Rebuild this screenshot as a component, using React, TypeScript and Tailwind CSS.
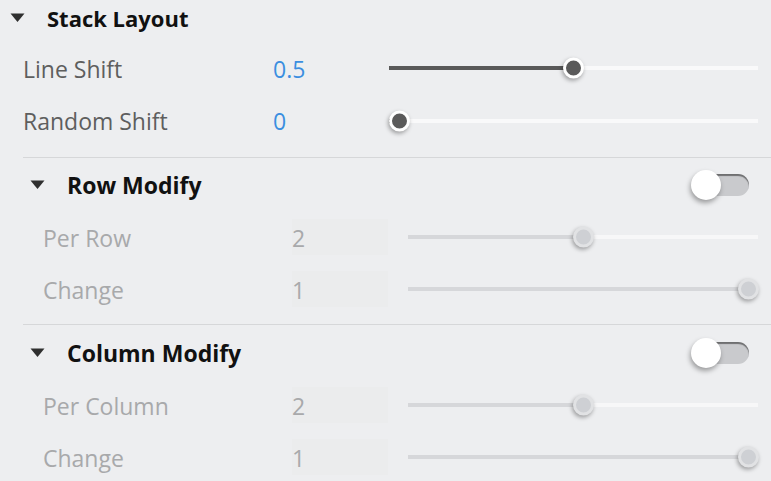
import React from "react";

function Caret() {
  return (
    <svg width="15" height="10" viewBox="0 0 15 10">
      <polygon points="0.5,0.5 14.5,0.5 7.5,9" fill="#2f2f2f" />
    </svg>
  );
}

function Slider({ value, disabled }: { value: number; disabled?: boolean }) {
  return (
    <div className="relative flex-1 h-[20px] flex items-center">
      <div className="relative w-full h-[4px]">
        <div className={`absolute inset-0 ${disabled ? "bg-[#f7f7f8]" : "bg-[#f9f9fa]"}`} />
        <div
          className={`absolute left-0 top-0 h-full ${disabled ? "bg-[#d6d7da]" : "bg-[#595959]"}`}
          style={{ width: `calc((100% - 20px) * ${value} + 10px)` }}
        />
        <div
          className={`absolute top-1/2 -translate-y-1/2 w-[21px] h-[21px] rounded-full border-[3px] shadow-[-1px_2px_4px_rgba(0,0,0,0.35)] ${
            disabled ? "bg-[#ced0d4] border-[#e1e2e4]" : "bg-[#5a5a5a] border-white"
          }`}
          style={{ left: `calc((100% - 20px) * ${value} - 0.5px)` }}
        />
      </div>
    </div>
  );
}

function Toggle() {
  return (
    <div className="relative w-[58px] h-[30px] flex items-center">
      <div className="absolute right-0 w-[44px] h-[22px] rounded-full bg-[#c9cacd] shadow-[inset_0_2px_1px_rgba(0,0,0,0.45)]" />
      <div className="absolute left-0 w-[30px] h-[30px] rounded-full bg-white shadow-[-1px_3px_5px_rgba(0,0,0,0.35)]" />
    </div>
  );
}

function Row({
  label,
  value,
  slider,
  disabled,
}: {
  label: string;
  value: string;
  slider: number;
  disabled?: boolean;
}) {
  return (
    <div className="flex items-center h-[52px] pl-[23px] pr-[13px]">
      <div className={`w-[249px] pt-[2px] text-[23px] ${disabled ? "text-[#a8a9ab]" : "text-[#5e5e5e]"}`}>{label}</div>
      <div
        className={`w-[96px] h-[36px] flex items-center pt-[2px] text-[23px] ${
          disabled ? "text-[#a8a9ab] bg-[#ebeced]" : "text-[#3b8ee0]"
        }`}
      >
        {value}
      </div>
      <div className="w-[20px]" />
      <Slider value={slider} disabled={disabled} />
    </div>
  );
}

function SubSection({ title, rows }: { title: string; rows: { label: string; value: string; slider: number }[] }) {
  return (
    <div>
      <div className="flex items-center h-[36px] pl-[10px] pr-[22px]">
        <Caret />
        <div className="ml-[22px] text-[23px] font-bold text-[#111111] flex-1">{title}</div>
        <Toggle />
      </div>
      <div className="mt-[8px]">
        {rows.map((r) => (
          <Row key={r.label} {...r} disabled />
        ))}
      </div>
    </div>
  );
}

export default function App() {
  return (
    <div
      className="w-[771px] h-[481px] overflow-hidden bg-[#edeef0]"
      style={{ fontFamily: '"Open Sans", "Noto Sans", sans-serif' }}
    >
      <div className="flex items-center h-[36px] pl-[10px]">
        <Caret />
        <div className="ml-[22px] text-[22px] font-bold text-[#111111]">Stack Layout</div>
      </div>
      <div className="mt-[6px]">
        <div className="flex items-center h-[52px] pl-[23px] pr-[13px]">
          <div className="w-[250px] pt-[2px] text-[23px] text-[#5e5e5e]">Line Shift</div>
          <div className="w-[116px] pt-[2px] text-[23px] text-[#3b8ee0]">0.5</div>
          <Slider value={0.5} />
        </div>
        <div className="flex items-center h-[53px] pl-[23px] pr-[13px]">
          <div className="w-[250px] pt-[2px] text-[23px] text-[#5e5e5e]">Random Shift</div>
          <div className="w-[116px] pt-[2px] text-[23px] text-[#3b8ee0]">0</div>
          <Slider value={0} />
        </div>
      </div>
      <div className="ml-[20px]">
        <div className="mt-[10px] ml-[3px] h-px bg-[#d6d7d9]" />
        <div className="mt-[9px]">
          <SubSection
            title="Row Modify"
            rows={[
              { label: "Per Row", value: "2", slider: 0.5 },
              { label: "Change", value: "1", slider: 1 },
            ]}
          />
        </div>
        <div className="mt-[9px] ml-[3px] h-px bg-[#d6d7d9]" />
        <div className="mt-[10px]">
          <SubSection
            title="Column Modify"
            rows={[
              { label: "Per Column", value: "2", slider: 0.5 },
              { label: "Change", value: "1", slider: 1 },
            ]}
          />
        </div>
      </div>
    </div>
  );
}
